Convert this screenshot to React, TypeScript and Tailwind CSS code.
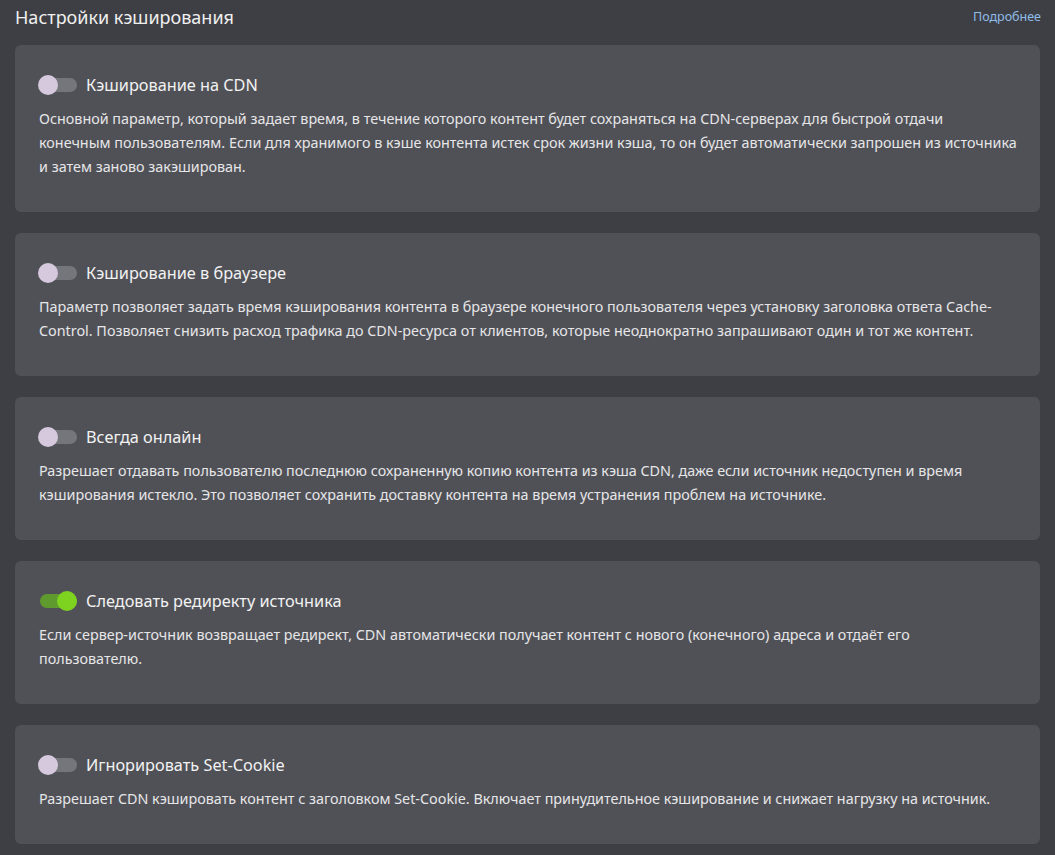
import React from "react"

type Option = {
  title: string
  lines: string[]
  enabled: boolean
}

const options: Option[] = [
  {
    title: "Кэширование на CDN",
    lines: [
      "Основной параметр, который задает время, в течение которого контент будет сохраняться на CDN-серверах для быстрой отдачи",
      "конечным пользователям. Если для хранимого в кэше контента истек срок жизни кэша, то он будет автоматически запрошен из источника",
      "и затем заново закэширован.",
    ],
    enabled: false,
  },
  {
    title: "Кэширование в браузере",
    lines: [
      "Параметр позволяет задать время кэширования контента в браузере конечного пользователя через установку заголовка ответа Cache-",
      "Control. Позволяет снизить расход трафика до CDN-ресурса от клиентов, которые неоднократно запрашивают один и тот же контент.",
    ],
    enabled: false,
  },
  {
    title: "Всегда онлайн",
    lines: [
      "Разрешает отдавать пользователю последнюю сохраненную копию контента из кэша CDN, даже если источник недоступен и время",
      "кэширования истекло. Это позволяет сохранить доставку контента на время устранения проблем на источнике.",
    ],
    enabled: false,
  },
  {
    title: "Следовать редиректу источника",
    lines: [
      "Если сервер-источник возвращает редирект, CDN автоматически получает контент с нового (конечного) адреса и отдаёт его",
      "пользователю.",
    ],
    enabled: true,
  },
  {
    title: "Игнорировать Set-Cookie",
    lines: [
      "Разрешает CDN кэшировать контент с заголовком Set-Cookie. Включает принудительное кэширование и снижает нагрузку на источник.",
    ],
    enabled: false,
  },
]

function Toggle({ on }: { on: boolean }) {
  return (
    <div className="relative w-[40px] h-[20px] flex items-center shrink-0">
      <div
        className={
          on
            ? "ml-[2px] w-[37px] h-[14px] rounded-full bg-[#5f9a2f]"
            : "ml-[2px] w-[37px] h-[14px] rounded-full bg-[#75767c]"
        }
      />
      <div
        className={
          on
            ? "absolute left-[19px] top-0 w-[20px] h-[20px] rounded-full bg-[#7ed321]"
            : "absolute left-0 top-0 w-[20px] h-[20px] rounded-full bg-[#d6c8dd]"
        }
      />
    </div>
  )
}

function OptionCard({ option }: { option: Option }) {
  return (
    <div className="bg-[#505157] rounded-[6px] pl-[24px] pr-[20px] pt-[30px] pb-[33px]">
      <div className="flex items-center gap-[8px] h-[20px] ml-[-1px]">
        <Toggle on={option.enabled} />
        <span className="text-[16.3px] text-[#f2f2f2] leading-none">{option.title}</span>
      </div>
      <div className="mt-[12px] text-[14.35px] leading-[24px] text-[#e6e6e8]">
        {option.lines.map((line, i) => (
          <div key={i} className="whitespace-nowrap">
            {line}
          </div>
        ))}
      </div>
    </div>
  )
}

export default function App() {
  return (
    <div
      className="min-h-screen bg-[#3e3f44] px-[15px] pb-[12px]"
      style={{ fontFamily: '"Noto Sans", "Open Sans", sans-serif' }}
    >
      <div className="flex items-center justify-between h-[33px] pt-[1px]">
        <h1 className="text-[18px] text-[#f0f0f0] font-normal">Настройки кэширования</h1>
        <a className="text-[12.5px] text-[#8fbde8] mr-[-1px]">Подробнее</a>
      </div>
      <div className="flex flex-col gap-[21px] mt-[12px]">
        {options.map(o => (
          <OptionCard key={o.title} option={o} />
        ))}
      </div>
    </div>
  )
}
